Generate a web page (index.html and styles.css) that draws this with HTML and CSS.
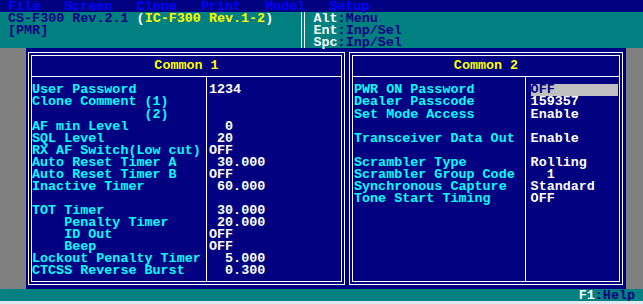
FILE: index.html
```html
<!DOCTYPE html>
<html lang="en">
<head>
  <meta charset="UTF-8" />
  <title>CS-F300</title>
  <link rel="stylesheet" href="styles.css">
</head>
<body>
  <div class="screen">
    <pre class="menubar"> File   Screen   Clone   Print   Model   Setup</pre>

    <div class="header">
      <pre class="hdr-left">CS-F300 Rev.2.1 <span class="white">(</span><span class="yellow">IC-F300 Rev.1-2</span><span class="white">)</span>
[PMR]</pre>
      <div class="hdr-sep"></div>
      <pre class="hdr-right"><span class="white">Alt</span>:Menu
<span class="white">Ent</span>:Inp/Sel
<span class="white">Spc</span>:Inp/Sel</pre>
    </div>

    <div class="main">
      <div class="desk">
        <div class="box box-1">
          <div class="box-in">
            <pre class="box-title">Common 1</pre>
            <div class="box-body">
              <pre class="labels labels-1">User Password
Clone Comment (1)
              (2)
AF min Level
SQL Level
RX AF Switch(Low cut)
Auto Reset Timer A
Auto Reset Timer B
Inactive Timer

TOT Timer
    Penalty Timer
    ID Out
    Beep
Lockout Penalty Timer
CTCSS Reverse Burst</pre>
              <pre class="values values-1">1234


  0
 20
OFF
 30.000
OFF
 60.000

 30.000
 20.000
OFF
OFF
  5.000
  0.300</pre>
            </div>
          </div>
        </div>

        <div class="box box-2">
          <div class="box-in">
            <pre class="box-title">Common 2</pre>
            <div class="box-body">
              <pre class="labels labels-2">PWR ON Password
Dealer Passcode
Set Mode Access

Transceiver Data Out

Scrambler Type
Scrambler Group Code
Synchronous Capture
Tone Start Timing</pre>
              <pre class="values values-2"><span class="sel">OFF</span>
159357
Enable

Enable

Rolling
  1
Standard
OFF</pre>
            </div>
          </div>
        </div>
      </div>
    </div>

    <pre class="statusbar"><span class="white">F1</span>:Help</pre>
  </div>
</body>
</html>
```

FILE: styles.css
```css
* {
  box-sizing: border-box;
}
body {
  margin: 0;
  background-color: #e2e8ef;
  font-family: "Liberation Mono", "DejaVu Sans Mono", monospace;
  font-weight: bold;
  font-size: 13.4px;
  line-height: 12.04px;
}
pre {
  margin: 0;
  font: inherit;
}
.screen {
  width: 643px;
}
.white {
  color: #fff;
}
.yellow {
  color: #ffff00;
}

/* top menu */
.menubar {
  height: 12.04px;
  padding-top: 1px;
  background-color: #000080;
  color: #0000ff;
}

/* header strip */
.header {
  height: 36.12px;
  display: flex;
  background-color: #008080;
  color: #000080;
}
.hdr-left {
  width: 301px;
  padding: 1px 0 0 8px;
}
.hdr-sep {
  width: 4px;
  border-left: 1px solid #fff;
  border-right: 1px solid #fff;
}
.hdr-right {
  padding: 1px 0 0 8.5px;
}

/* main work area */
.main {
  height: 240.8px;
  background-color: #808080;
  padding: 0 17px 0 26px;
}
.desk {
  height: 100%;
  display: flex;
  gap: 4px;
  padding: 4px 3px 4px 2px;
  background-color: #000080;
}
.box {
  border: 1px solid #fff;
  padding: 2px;
}
.box-1 {
  width: 317px;
}
.box-2 {
  flex: 1;
}
.box-in {
  height: 100%;
  display: flex;
  flex-direction: column;
  border: 1px solid #fff;
}
.box-title {
  height: 21px;
  padding-top: 4.2px;
  border-bottom: 1px solid #fff;
  color: #ffff00;
  text-align: center;
}
.box-body {
  flex: 1;
  display: flex;
}
.labels {
  padding-top: 7.3px;
  color: #00ffff;
}
.labels-1 {
  width: 174px;
}
.labels-2 {
  width: 172px;
  padding-left: 1px;
}
.values {
  flex: 1;
  padding-top: 7.3px;
  border-left: 1px solid #fff;
  color: #fff;
}
.values-1 {
  padding-left: 2px;
}
.values-2 {
  padding-left: 4.6px;
  padding-right: 1px;
}
.sel {
  display: inline-block;
  width: 100%;
  background-color: #c0c0c0;
  color: #000080;
}

/* bottom status */
.statusbar {
  height: 12.04px;
  padding: 1px 8px 0 0;
  background-color: #008080;
  color: #000080;
  text-align: right;
}
```
